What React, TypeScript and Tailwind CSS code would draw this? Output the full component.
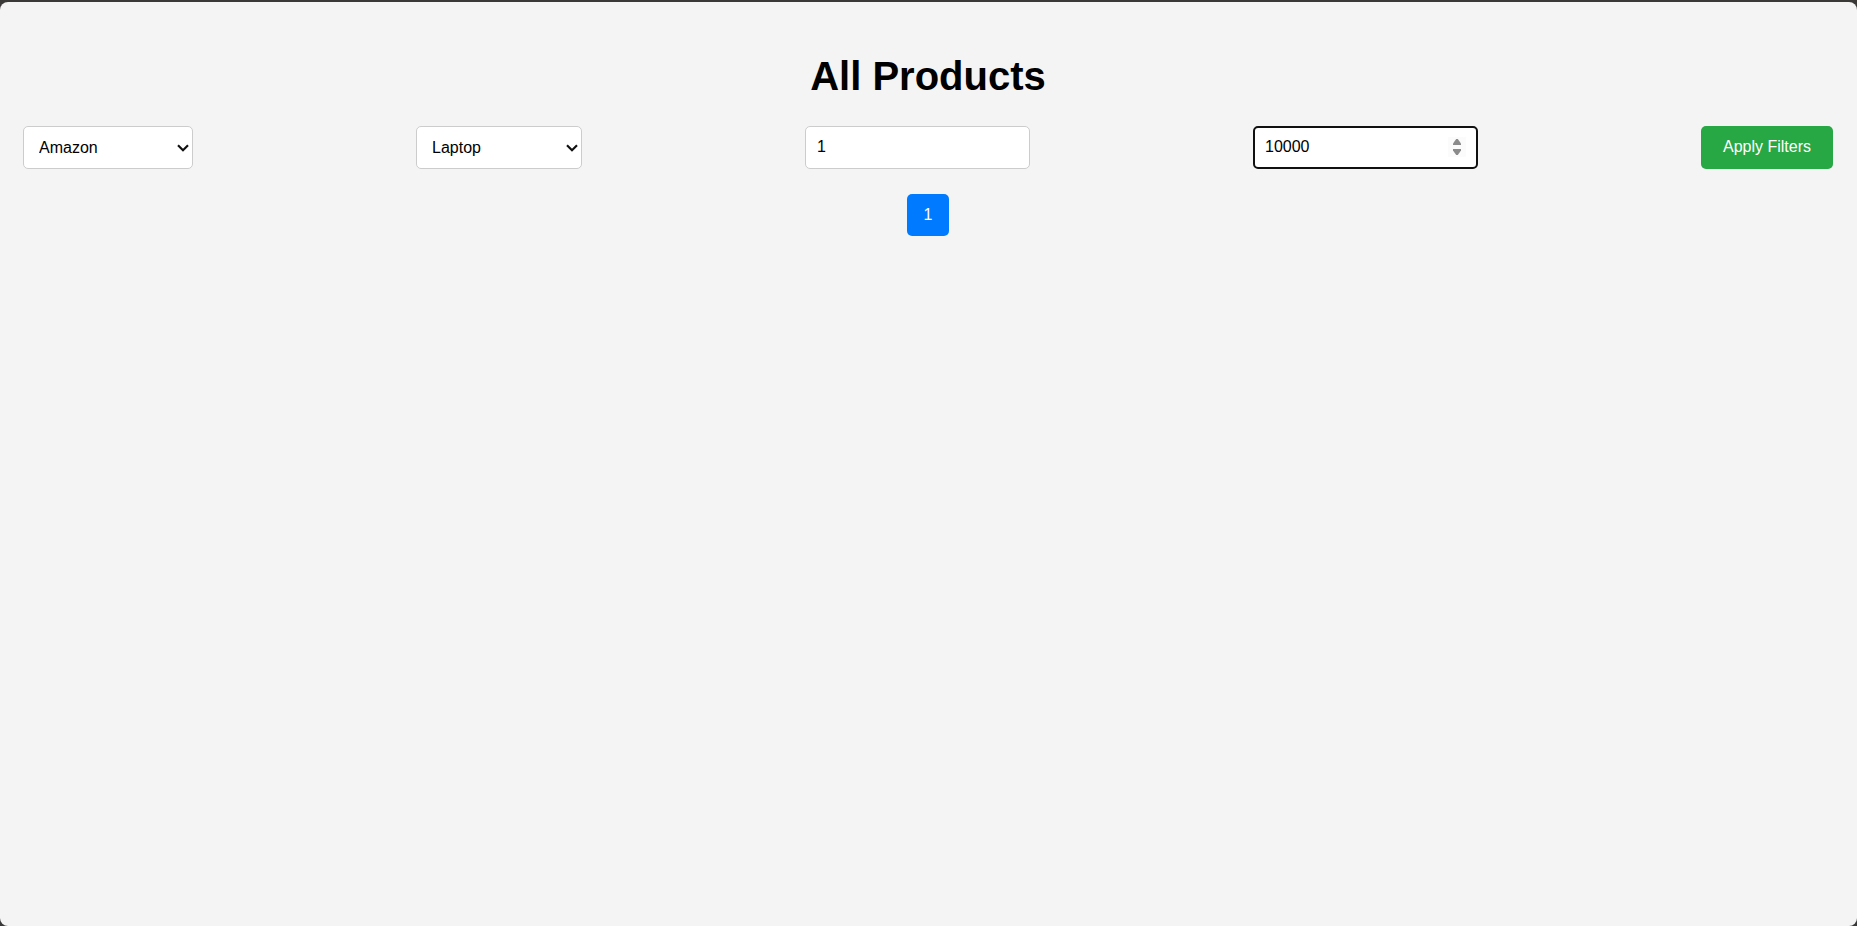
import { useRef, useState } from "react";

const field =
  "h-[43px] rounded-[5px] border border-[#cccccc] bg-white text-base text-black";

type SelectProps = {
  label: string;
  value: string;
  options: string[];
  onChange: (value: string) => void;
  width: string;
};

function Select({ label, value, options, onChange, width }: SelectProps) {
  return (
    <div className="relative">
      <select
        aria-label={label}
        value={value}
        onChange={(e) => onChange(e.target.value)}
        className={`${field} ${width} block appearance-none pr-6 pl-[15px]`}
      >
        {options.map((option) => (
          <option key={option}>{option}</option>
        ))}
      </select>
      <svg
        className="pointer-events-none absolute top-[18px] right-1 h-2 w-3"
        viewBox="0 0 12 8"
        fill="none"
        stroke="#101010"
        strokeWidth="2.2"
        aria-hidden="true"
      >
        <path d="M1 1.3 6 6.2 11 1.3" />
      </svg>
    </div>
  );
}

export default function App() {
  const [store, setStore] = useState("Amazon");
  const [category, setCategory] = useState("Laptop");
  const [minPrice, setMinPrice] = useState("1");
  const [maxPrice, setMaxPrice] = useState("10000");
  const maxRef = useRef<HTMLInputElement>(null);

  const step = (direction: 1 | -1) => {
    setMaxPrice(String(Number(maxPrice) + direction));
    maxRef.current?.focus();
  };

  return (
    <div className="h-screen overflow-hidden bg-[#3b3838] pt-[2px] font-['Liberation_Sans',Arial,sans-serif] text-base text-black">
      <main className="h-full rounded-lg bg-[#f4f4f4] pt-[50px] pr-6 pl-[23px]">
        <h1 className="mb-[26px] text-center text-[40px] leading-12 font-bold">
          All Products
        </h1>
        <form
          className="flex items-center justify-between"
          onSubmit={(e) => e.preventDefault()}
        >
          <Select
            label="Store"
            value={store}
            options={["Amazon", "Flipkart"]}
            onChange={setStore}
            width="w-[170px]"
          />
          <Select
            label="Category"
            value={category}
            options={["Laptop", "Phone"]}
            onChange={setCategory}
            width="w-[166px]"
          />
          <input
            type="number"
            aria-label="Minimum price"
            value={minPrice}
            onChange={(e) => setMinPrice(e.target.value)}
            className={`${field} w-[225px] px-[11px] pb-[2px]`}
          />
          <div className="relative">
            <input
              ref={maxRef}
              type="number"
              aria-label="Maximum price"
              value={maxPrice}
              onChange={(e) => setMaxPrice(e.target.value)}
              className="block h-[43px] w-[225px] appearance-none rounded-[5px] border-2 border-[#101010] bg-white px-[10px] pb-[2px] text-base text-black outline-none [&::-webkit-inner-spin-button]:appearance-none"
            />
            <div className="absolute top-[11px] right-3 flex h-5 w-[18px] flex-col bg-[#fbfbfb]">
              <button
                type="button"
                aria-label="Increase maximum price"
                onClick={() => step(1)}
                className="flex h-[10px] items-center justify-center"
              >
                <svg className="h-[6px] w-2" viewBox="0 0 8 6" fill="#8b8b8b" aria-hidden="true">
                  <path d="M3.2 0h1.6L8 4.6V6H0V4.6z" />
                </svg>
              </button>
              <button
                type="button"
                aria-label="Decrease maximum price"
                onClick={() => step(-1)}
                className="flex h-[10px] items-center justify-center"
              >
                <svg className="h-[6px] w-2" viewBox="0 0 8 6" fill="#8b8b8b" aria-hidden="true">
                  <path d="M3.2 6h1.6L8 1.4V0H0v1.4z" />
                </svg>
              </button>
            </div>
          </div>
          <button
            type="submit"
            className="h-[43px] w-[132px] rounded-[5px] bg-[#28a745] pb-[2px] text-base text-white"
          >
            Apply Filters
          </button>
        </form>
        <nav aria-label="Pages" className="mt-[25px] flex justify-center">
          <button
            type="button"
            className="size-[42px] rounded-[5px] bg-[#007bff] text-base text-white"
          >
            1
          </button>
        </nav>
      </main>
    </div>
  );
}
